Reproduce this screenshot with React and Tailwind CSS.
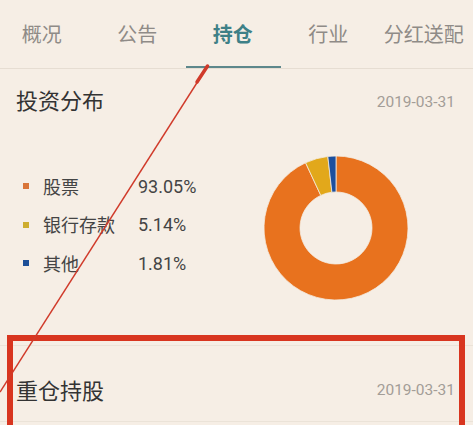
import React from "react";

const cx = 72, cy = 72, R = 72, r = 36;
function pt(rad, a) {
  const t = (a - 90) * Math.PI / 180;
  return [cx + rad * Math.cos(t), cy + rad * Math.sin(t)];
}
function seg(a0, a1) {
  const large = a1 - a0 > 180 ? 1 : 0;
  const [x0, y0] = pt(R, a0), [x1, y1] = pt(R, a1);
  const [x2, y2] = pt(r, a1), [x3, y3] = pt(r, a0);
  return `M${x0} ${y0} A${R} ${R} 0 ${large} 1 ${x1} ${y1} L${x2} ${y2} A${r} ${r} 0 ${large} 0 ${x3} ${y3} Z`;
}

const data = [
  { v: 93.05, c: "#e8721e" },
  { v: 5.14, c: "#e2a81b" },
  { v: 1.81, c: "#1c4f9e" },
];

function Donut() {
  let acc = 0;
  return (
    <svg width="144" height="144" viewBox="0 0 144 144">
      {data.map((d, i) => {
        const a0 = acc * 3.6;
        acc += d.v;
        const a1 = acc * 3.6;
        return <path key={i} d={seg(a0, a1)} fill={d.c} stroke="#f4ebe0" strokeWidth="0.8" />;
      })}
    </svg>
  );
}

const tabs = ["概况", "公告", "持仓", "行业", "分红送配"];

export default function App() {
  return (
    <div className="relative w-[473px] h-[425px] overflow-hidden bg-[#f6eee5] font-['Noto_Sans_CJK_SC',sans-serif]">
      <div className="h-[69px] border-b border-[#e6ddd2] overflow-hidden">
        <div className="-ml-[6px] grid grid-cols-[repeat(5,95.5px)] h-full">
          {tabs.map((t, i) => (
            <div key={t} className="relative flex items-center justify-center whitespace-nowrap">
              <span className={i === 2 ? "text-[20px] font-bold text-[#3e8087]" : "text-[20px] text-[#8f8b87]"}>{t}</span>
              {i === 2 && <div className="absolute bottom-0 left-[1px] right-0 h-[2px] bg-[#5d878b]" />}
            </div>
          ))}
        </div>
      </div>

      <div className="flex items-center justify-between h-[64px] pl-[16px] pr-[18px]">
        <span className="mb-[4px] text-[22px] text-[#333] leading-none">投资分布</span>
        <span className="mt-[3px] font-['Roboto',sans-serif] text-[15.5px] text-[#a39d97]">2019-03-31</span>
      </div>

      <div className="flex h-[200px]">
        <div className="flex flex-col pt-[34px] pl-[23px]">
          {[
            ["股票", "93.05%", "#d97539"],
            ["银行存款", "5.14%", "#cead2f"],
            ["其他", "1.81%", "#1d4f98"],
          ].map(([n, p, c]) => (
            <div key={n} className="flex items-center h-[38.5px]">
              <span className="w-[6px] h-[6px]" style={{ background: c }} />
              <span className="ml-[14px] w-[95px] text-[18px] text-[#444]">{n}</span>
              <span className="font-['Roboto',sans-serif] text-[18px] text-[#444]">{p}</span>
            </div>
          ))}
        </div>
        <div className="ml-auto mr-[65px] pt-[23px]">
          <Donut />
        </div>
      </div>

      <div className="mt-[12px] border-t border-b border-[#ebe3d8] flex items-center justify-between h-[77px] pt-[14px] pl-[16px] pr-[18px]">
        <span className="mb-[3px] text-[22px] text-[#333] leading-none">重仓持股</span>
        <span className="font-['Roboto',sans-serif] text-[15.5px] text-[#a39d97]">2019-03-31</span>
      </div>

      <div className="absolute left-[7px] top-[335px] w-[458px] h-[140px] border-[6px] border-[#d8351f]" />

      <svg className="absolute inset-0 pointer-events-none" width="473" height="425">
        <line x1="207" y1="67" x2="0" y2="392" stroke="#d03a2a" strokeWidth="1.4" />
        <line x1="207.5" y1="66" x2="197" y2="82" stroke="#d03a2a" strokeWidth="3.5" strokeLinecap="round" />
      </svg>
    </div>
  );
}
